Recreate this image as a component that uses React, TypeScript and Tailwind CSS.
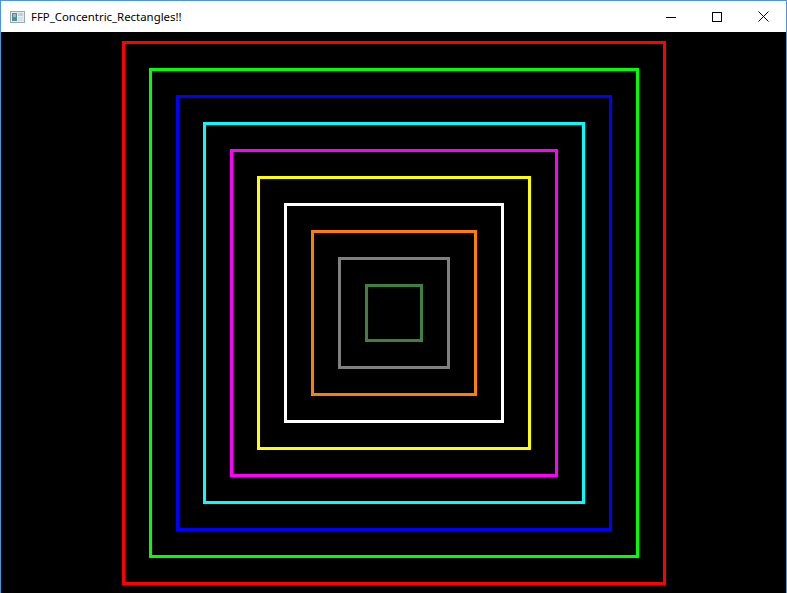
import React from "react";

const colors = [
  "border-[#ff0000]",
  "border-[#00ff00]",
  "border-[#0000ff]",
  "border-[#00ffff]",
  "border-[#ff00ff]",
  "border-[#ffff00]",
  "border-[#ffffff]",
  "border-[#ff8000]",
  "border-[#808080]",
  "border-[#408040]",
];

function Rect({ level }: { level: number }) {
  const last = level === colors.length - 1;
  return (
    <div
      className={`border-[3px] ${colors[level]} ${
        last ? "w-[58px] h-[58px]" : "p-[24px]"
      } flex`}
    >
      {!last && <Rect level={level + 1} />}
    </div>
  );
}

export default function App() {
  return (
    <div className="w-[787px] h-[593px] flex flex-col bg-[#4f94d4] px-px pt-px overflow-hidden">
      <div
        className="h-[31px] bg-white flex items-center shrink-0"
        style={{ fontFamily: '"Segoe UI", "Noto Sans", sans-serif' }}
      >
        <svg width="16" height="16" viewBox="0 0 16 16" className="ml-[9px] mr-[5px]">
          <rect x="0.5" y="2.5" width="14" height="11" fill="#e6ecef" stroke="#9aa7ad" />
          <rect x="2" y="4" width="5" height="8" fill="#4f8f93" />
          <rect x="3" y="5" width="3" height="3" fill="#8cc0c2" />
          <rect x="8" y="4" width="5" height="3" fill="#c4d0d5" />
          <rect x="8" y="8" width="5" height="4" fill="#d8e0e4" />
        </svg>
        <span className="text-[11.4px] text-black leading-none">FFP_Concentric_Rectangles!!</span>
        <div className="ml-auto flex h-full">
          <div className="w-[46px] h-full flex items-center justify-center">
            <svg width="10" height="10" viewBox="0 0 10 10">
              <line x1="0" y1="5.5" x2="10" y2="5.5" stroke="#000" strokeWidth="1" />
            </svg>
          </div>
          <div className="w-[46px] h-full flex items-center justify-center">
            <svg width="10" height="10" viewBox="0 0 10 10">
              <rect x="0.5" y="0.5" width="9" height="9" fill="none" stroke="#000" strokeWidth="1" />
            </svg>
          </div>
          <div className="w-[46px] h-full flex items-center justify-center">
            <svg width="11" height="11" viewBox="0 0 11 11">
              <line x1="0.5" y1="0.5" x2="10.5" y2="10.5" stroke="#000" strokeWidth="1" />
              <line x1="10.5" y1="0.5" x2="0.5" y2="10.5" stroke="#000" strokeWidth="1" />
            </svg>
          </div>
        </div>
      </div>
      <div className="flex-1 bg-black flex items-center justify-center">
        <Rect level={0} />
      </div>
    </div>
  );
}
